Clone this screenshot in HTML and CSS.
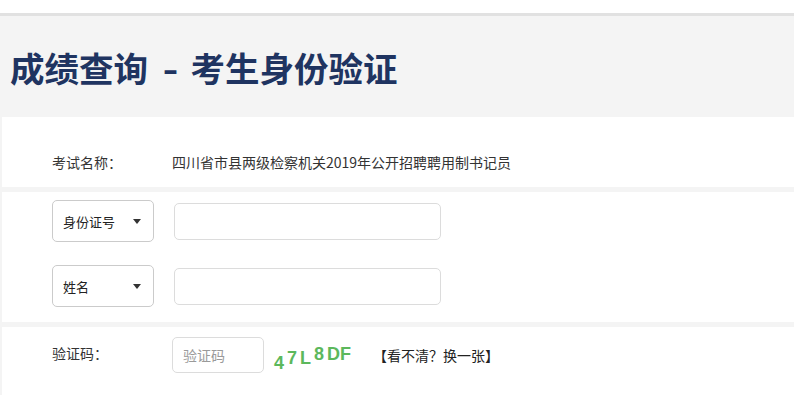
FILE: index.html
```html
<!DOCTYPE html>
<html lang="zh-CN">
<head>
<meta charset="utf-8">
<title>成绩查询 - 考生身份验证</title>
<link rel="stylesheet" href="styles.css">
</head>
<body>
<div class="page">
  <header class="header">
    <h1 class="title">成绩查询 <span class="dash">-</span> 考生身份验证</h1>
  </header>
  <main class="content">
    <section class="panel panel-exam">
      <div class="row">
        <span class="label">考试名称：</span>
        <span class="value">四川省市县两级检察机关2019年公开招聘聘用制书记员</span>
      </div>
    </section>
    <section class="panel panel-id">
      <div class="field-row">
        <div class="select"><span>身份证号</span><i class="caret"></i></div>
        <div class="input wide"></div>
      </div>
      <div class="field-row">
        <div class="select"><span>姓名</span><i class="caret"></i></div>
        <div class="input wide"></div>
      </div>
    </section>
    <section class="panel panel-code">
      <div class="code-row">
        <span class="label">验证码：</span>
        <div class="input small"><span class="placeholder">验证码</span></div>
        <div class="captcha">
          <span class="c c1">4</span>
          <span class="c c2">7</span>
          <span class="c c2">L</span>
          <span class="c c3">8</span>
          <span class="c c3 df">DF</span>
        </div>
        <span class="refresh">【看不清？换一张】</span>
      </div>
    </section>
  </main>
</div>
</body>
</html>
```

FILE: styles.css
```css
* { box-sizing: border-box; }
html, body {
  margin: 0;
  padding: 0;
  background: #fff;
  font-family: "Noto Sans CJK SC", "Liberation Sans", sans-serif;
  color: #333;
}
.page {
  margin-top: 13px;
  border-top: 3px solid #e1e1e1;
  background: #f4f4f4;
  height: 382px;
  overflow: hidden;
}
.header {
  height: 101px;
  display: flex;
  align-items: center;
  padding-left: 10px;
}
.title {
  margin: 0;
  font-size: 34.5px;
  font-weight: bold;
  color: #1f3461;
  line-height: 1;
  position: relative;
  top: 1px;
  white-space: nowrap;
}
.dash {
  display: inline-block;
  margin: 0 6px 0 8px;
  transform: scaleX(1.25);
}
.content {
  padding-left: 2px;
  display: flex;
  flex-direction: column;
  gap: 5px;
}
.panel {
  background: #fff;
  padding-left: 50px;
}
.panel-exam {
  height: 70px;
  padding-top: 35px;
}
.row {
  display: flex;
  align-items: center;
  height: 20px;
  font-size: 14px;
}
.label {
  width: 120px;
  font-size: 14px;
  flex: none;
}
.value { font-size: 14px; }
.panel-id {
  height: 130px;
  padding-top: 8px;
  display: flex;
  flex-direction: column;
  gap: 23px;
}
.field-row {
  display: flex;
  align-items: center;
  height: 42px;
}
.select {
  width: 102px;
  height: 42px;
  border: 1px solid #cbcbcb;
  border-radius: 5px;
  display: flex;
  align-items: center;
  justify-content: space-between;
  padding: 0 12px 0 10px;
  font-size: 13px;
  color: #222;
}
.caret {
  width: 0;
  height: 0;
  border-left: 4.5px solid transparent;
  border-right: 4.5px solid transparent;
  border-top: 5px solid #333;
}
.input {
  border: 1px solid #dcdcdc;
  border-radius: 5px;
  background: #fff;
}
.input.wide {
  width: 267px;
  height: 37px;
  margin-left: 20px;
}
.panel-code {
  height: 80px;
  padding-top: 10px;
}
.code-row {
  display: flex;
  align-items: center;
  height: 36px;
}
.code-row .label { position: relative; top: -2px; }
.input.small {
  width: 92px;
  height: 36px;
  display: flex;
  align-items: center;
  padding-left: 10px;
}
.placeholder {
  font-size: 14px;
  color: #9a9a9a;
}
.captcha {
  display: flex;
  align-items: flex-start;
  height: 26px;
  margin-left: 10px;
  margin-top: 5px;
  font-family: "Liberation Sans", Arial, sans-serif;
  font-weight: bold;
  font-size: 18px;
  line-height: 1;
  color: #5cb85c;
  gap: 3px;
}
.c1 { padding-top: 9px; }
.c2 { padding-top: 4px; }
.c3 { padding-top: 0; }
.df { margin-left: 0; }
.refresh {
  margin-left: 22px;
  font-size: 14px;
  color: #222;
}
```
